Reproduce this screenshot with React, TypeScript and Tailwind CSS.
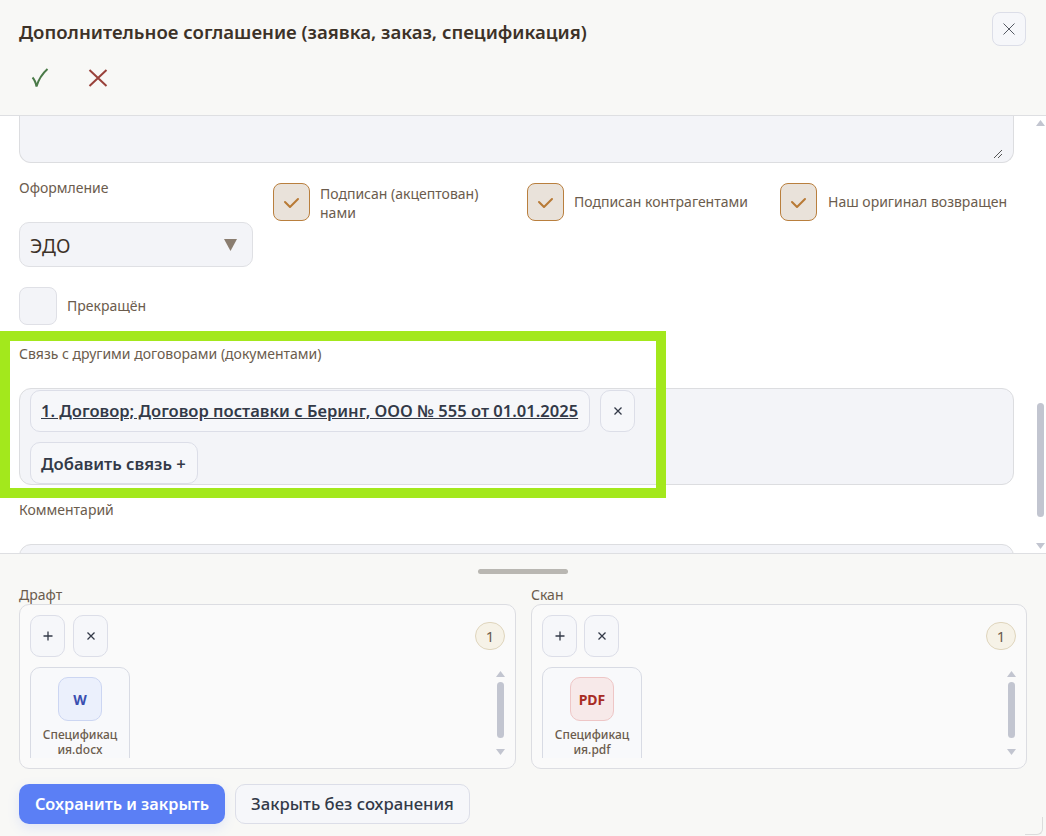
const LABEL = "text-[14px] leading-[20px] text-[#6b5c4d]";

function CheckBox({ checked = true }: { checked?: boolean }) {
  if (!checked) {
    return <div className="h-[38px] w-[38px] shrink-0 rounded-[8px] border border-[#dfe0e6] bg-[#f3f4f8]" />;
  }
  return (
    <div className="h-[38px] w-[37px] shrink-0 rounded-[8px] border border-[#b97f3e] bg-[#e9e2da]">
      <svg width="35" height="36" viewBox="0 0 35 36" fill="none" stroke="#b87a35" strokeWidth="2" strokeLinecap="round" strokeLinejoin="round">
        <polyline points="11,18 16,23 24,15" />
      </svg>
    </div>
  );
}

function Arrow({ up }: { up?: boolean }) {
  return (
    <svg className="shrink-0" width="9" height="7" viewBox="0 0 9 7" fill="#c2c5d0">
      <polygon points={up ? "4.5,0 9,6 0,6" : "0,0 9,0 4.5,6"} />
    </svg>
  );
}

function SmallBtn({ children }: { children: React.ReactNode }) {
  return (
    <div className="flex h-[42px] w-[35px] items-center justify-center rounded-[10px] border border-[#dcdee8] bg-[#f6f7fa] text-[#333a48]">
      {children}
    </div>
  );
}

function PlusIcon() {
  return (
    <svg width="12" height="12" viewBox="0 0 12 12" stroke="currentColor" strokeWidth="1.3">
      <path d="M6 1.5v9M1.5 6h9" />
    </svg>
  );
}

function TimesIcon() {
  return (
    <svg width="10" height="10" viewBox="0 0 10 10" stroke="currentColor" strokeWidth="1.3">
      <path d="M1.5 1.5l7 7M8.5 1.5l-7 7" />
    </svg>
  );
}

function FilePanel({
  title,
  badge,
  name,
  iconClass,
  width,
  btnGap,
}: {
  title: string;
  badge: string;
  name: string;
  iconClass: string;
  width: string;
  btnGap: string;
}) {
  return (
    <div className={width}>
      <div className="h-[19px] text-[14px] leading-[20px] text-[#6b5c4d]">{title}</div>
      <div className="h-[165px] rounded-[10px] border border-[#dcdde2] bg-[#fafafa] pt-[10px] pl-[10px] pr-[10px]">
        <div className="flex items-center justify-between">
          <div className={`flex ${btnGap}`}>
            <SmallBtn>
              <PlusIcon />
            </SmallBtn>
            <SmallBtn>
              <TimesIcon />
            </SmallBtn>
          </div>
          <div className="flex h-[28px] w-[30px] items-center justify-center rounded-full border border-[#dfd5bd] bg-[#f6f2e7] text-[15px] text-[#6b5c4d]">
            1
          </div>
        </div>
        <div className="mt-[10px] flex h-[91px] justify-between overflow-hidden">
          <div className="h-[110px] w-[100px] rounded-t-[10px] border border-[#d8dbe4] bg-[#f8f9fb] pt-[9px]">
            <div className={`mx-auto flex h-[44px] w-[44px] items-center justify-center rounded-[10px] border text-[14px] font-bold ${iconClass}`}>
              {badge}
            </div>
            <div className="mt-[6px] text-center text-[12px] font-medium leading-[15px] text-[#6b5c4d]">
              Спецификац
              <br />
              {name}
            </div>
          </div>
          <div className="flex h-[91px] w-[9px] flex-col items-center pt-[4px]">
            <Arrow up />
            <div className="mt-[4px] h-[56px] w-[7px] shrink-0 rounded-full bg-[#c2c5d0]" />
            <div className="mt-[11px]">
              <Arrow />
            </div>
          </div>
        </div>
      </div>
    </div>
  );
}

export default function App() {
  return (
    <div className="relative flex h-[836px] w-[1046px] flex-col overflow-hidden bg-white font-['Noto_Sans','Open_Sans',sans-serif]">
      <header className="h-[116px] shrink-0 border-b border-[#dedfe2] bg-[#f8f8f6] pl-[19px] pr-[20px] pt-[12px]">
        <div className="flex items-start justify-between">
          <h1 className="pt-[6px] text-[18.6px] font-semibold leading-[28px] text-[#3d3228]">
            Дополнительное соглашение (заявка, заказ, спецификация)
          </h1>
          <div className="flex h-[34px] w-[34px] items-center justify-center rounded-[8px] border border-[#dcdee8] bg-[#f6f7fa]">
            <svg width="14" height="14" viewBox="0 0 14 14" stroke="#555a63" strokeWidth="1">
              <path d="M1.5 1.5l11 11M12.5 1.5l-11 11" />
            </svg>
          </div>
        </div>
        <div className="mt-[22px] flex items-center gap-[37px] pl-[12px]">
          <svg width="20" height="20" viewBox="0 0 20 20" fill="none" stroke="#4a7a48" strokeWidth="2">
            <path d="M1.500 9.500c1.500 1.500 3 4 4 9 2-7 6-13 11-17.500" />
          </svg>
          <svg width="20" height="18" viewBox="0 0 20 18" fill="none" stroke="#99413a" strokeWidth="2">
            <path d="M1.500 1l17 16M18.500 1l-17 16" />
          </svg>
        </div>
      </header>

      <main className="flex h-[437px] shrink-0 overflow-hidden">
        <div className="w-[1033px] shrink-0 pl-[19px] pr-[19px]">
          <div className="relative h-[47px] rounded-b-[12px] border border-t-0 border-[#dcdde0] bg-[#f3f4f8]">
            <svg className="absolute bottom-[3px] right-[10px]" width="10" height="10" viewBox="0 0 10 10" stroke="#555" strokeWidth="1">
              <path d="M1 9l8-8M5 9l4-4" />
            </svg>
          </div>

          <div className="mt-[15px] flex">
            <div className="w-[254px] shrink-0">
              <div className={LABEL}>Оформление</div>
              <div className="mt-[24px] flex h-[45px] w-[234px] items-center justify-between rounded-[10px] border border-[#dfe0e4] bg-[#f3f4f8] pl-[10px] pr-[15px]">
                <span className="pt-[3px] text-[19px] text-[#3d3228]">ЭДО</span>
                <svg width="13" height="12" viewBox="0 0 13 12" fill="#8a7d70">
                  <polygon points="0,0 13,0 6.5,12" />
                </svg>
              </div>
            </div>
            <div className="flex w-[254px] items-start gap-[10px] pt-[5px]">
              <CheckBox />
              <div className="w-[175px] pt-[1px] text-[14px] leading-[19px] text-[#6b5c4d]">Подписан (акцептован) нами</div>
            </div>
            <div className="flex w-[253px] items-start gap-[10px] pt-[5px]">
              <CheckBox />
              <div className={`${LABEL} pt-[9px]`}>Подписан контрагентами</div>
            </div>
            <div className="flex items-start gap-[11px] pt-[5px]">
              <CheckBox />
              <div className={`${LABEL} pt-[9px]`}>Наш оригинал возвращен</div>
            </div>
          </div>

          <div className="mt-[20px] flex items-center gap-[10px]">
            <CheckBox checked={false} />
            <div className={LABEL}>Прекращён</div>
          </div>

          <div className={`${LABEL} mt-[19px]`}>Связь с другими договорами (документами)</div>
          <div className="mt-[24px] h-[97px] rounded-[12px] border border-[#dcdde0] bg-[#f3f4f8] pl-[10px] pt-[1px]">
            <div className="flex gap-[10px]">
              <div className="flex h-[42px] w-[560px] items-center rounded-[10px] border border-[#dcdee8] bg-[#f6f7fa] px-[10px] text-[16.55px] font-semibold text-[#333a48] underline">
                1. Договор; Договор поставки с Беринг, ООО № 555 от 01.01.2025
              </div>
              <SmallBtn>
                <TimesIcon />
              </SmallBtn>
            </div>
            <div className="mt-[10px] flex h-[42px] w-[168px] items-center rounded-[10px] border border-[#dcdee8] bg-[#f6f7fa] px-[10px] pt-[3px] text-[16.6px] font-semibold text-[#333a48]">
              Добавить связь +
            </div>
          </div>

          <div className={`${LABEL} mt-[15px]`}>Комментарий</div>
          <div className="mt-[24px] h-[40px] rounded-[12px] border border-[#dcdde0] bg-[#f3f4f8]" />
        </div>
        <div className="ml-[3px] flex w-[9px] flex-col items-center pt-[4px]">
          <Arrow up />
          <div className="mt-[276px] h-[114px] w-[7px] shrink-0 rounded-full bg-[#c2c5d0]" />
          <div className="mt-[26px]">
            <Arrow />
          </div>
        </div>
      </main>

      <footer className="flex-1 border-t border-[#dedfe2] bg-[#f8f8f6] px-[19px] pt-[15px]">
        <div className="mx-auto h-[5px] w-[90px] rounded-full bg-[#b9b7b2]" />
        <div className="mt-[11px] flex gap-[15px]">
          <FilePanel
            title="Драфт"
            badge="W"
            name="ия.docx"
            iconClass="border-[#ccd6f2] bg-[#ebf0fc] text-[#3a4fb0]"
            width="w-[497px]"
            btnGap="gap-[8px]"
          />
          <FilePanel
            title="Скан"
            badge="PDF"
            name="ия.pdf"
            iconClass="border-[#eec6c6] bg-[#f7e9e9] text-[#a82c24]"
            width="w-[496px]"
            btnGap="gap-[7px]"
          />
        </div>
        <div className="mt-[15px] flex gap-[10px]">
          <div className="flex h-[40px] w-[206px] items-center justify-center rounded-[10px] bg-[#5b7ff5] text-[16.3px] font-semibold text-white shadow-[0_4px_12px_rgba(91,127,245,0.15)]">
            Сохранить и закрыть
          </div>
          <div className="flex h-[40px] w-[235px] items-center justify-center rounded-[10px] border border-[#dcdee8] bg-[#f6f7fa] text-[16.7px] font-medium text-[#333a48]">
            Закрыть без сохранения
          </div>
        </div>
      </footer>

      <div className="pointer-events-none absolute bottom-[1px] right-[3px] h-[18px] w-[18px] rounded-br-[6px] border-b border-r border-[#dcdcdc]" />
      <div className="pointer-events-none absolute left-0 top-[331px] h-[167px] w-[666px] border-[10px] border-[#a3e81c]" />
    </div>
  );
}
